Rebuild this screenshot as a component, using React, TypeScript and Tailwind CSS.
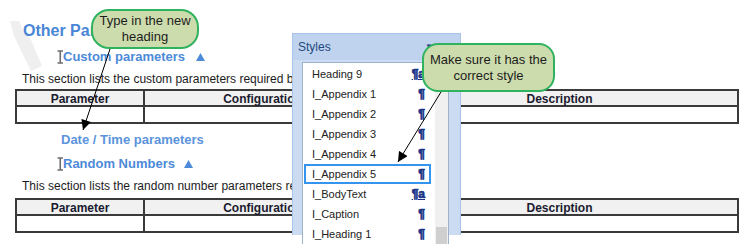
import React from "react";

const styles = [
  { name: "Heading 9", mark: "¶a" },
  { name: "I_Appendix 1", mark: "¶" },
  { name: "I_Appendix 2", mark: "¶" },
  { name: "I_Appendix 3", mark: "¶" },
  { name: "I_Appendix 4", mark: "¶" },
  { name: "I_Appendix 5", mark: "¶", selected: true },
  { name: "I_BodyText", mark: "¶a" },
  { name: "I_Caption", mark: "¶" },
  { name: "I_Heading 1", mark: "¶" },
];

function IBeam() {
  return (
    <svg width="7" height="14" viewBox="0 0 7 14" className="-mr-[1px] shrink-0">
      <path d="M0.5 1 H6 M3.25 1 V13 M0.5 13 H6" stroke="#6e6e6e" strokeWidth="1.6" fill="none" />
    </svg>
  );
}

function Tri() {
  return (
    <svg width="9" height="8" viewBox="0 0 9 8" className="shrink-0">
      <path d="M4.5 0 L9 8 L0 8 Z" fill="#4d8ad8" />
    </svg>
  );
}

function ParamTable({ className }: { className: string }) {
  return (
    <div className={`mx-[15px] w-[724px] border-2 border-[#3a3a3a] ${className}`}>
      <div className="grid grid-cols-[128px_237px_1fr] h-[16px] bg-[#f1f1f1] border-b-2 border-[#3a3a3a] text-[12px] font-bold text-[#1b1b30] leading-[16px] text-center">
        <div className="border-r-2 border-[#3a3a3a]">Parameter</div>
        <div className="border-r-2 border-[#3a3a3a]">Configuration</div>
        <div>Description</div>
      </div>
      <div className="grid grid-cols-[128px_237px_1fr] h-[15px]">
        <div className="border-r-2 border-[#3a3a3a]" />
        <div className="border-r-2 border-[#3a3a3a]" />
        <div />
      </div>
    </div>
  );
}

export default function App() {
  return (
    <div className="relative w-[756px] h-[248px] overflow-hidden bg-white font-['Liberation_Sans',Arial,sans-serif]">
      {/* faded shape behind heading */}
      <svg className="absolute left-0 top-0" width="50" height="80">
        <polygon points="10,21 19,21 23,31 28,33 42,66 31,71 14,36" fill="#efefef" />
      </svg>

      {/* document */}
      <div className="relative pt-[21px]">
        <div className="pl-[23px] text-[16px] leading-[20px] font-bold text-[#4a86d6]">Other Parameters</div>
        <div className="mt-[6px] pl-[57px] flex items-center gap-[11px] h-[20px]">
          <div className="flex items-center">
            <IBeam />
            <span className="text-[13px] font-bold text-[#4d8ad8] leading-[20px]">Custom parameters</span>
          </div>
          <Tri />
        </div>
        <div className="mt-[4px] pl-[22px] text-[12px] leading-[16px] text-[#1c1c1c] whitespace-nowrap">
          This section lists the custom parameters required by the application and how they are configured.
        </div>
        <ParamTable className="mt-[2px]" />
        <div className="mt-[6px] pl-[61px] text-[13px] font-bold text-[#5b94dc] leading-[20px]">Date / Time parameters</div>
        <div className="mt-[4px] pl-[57px] flex items-center gap-[9px] h-[20px]">
          <div className="flex items-center">
            <IBeam />
            <span className="text-[13px] font-bold text-[#4d8ad8] leading-[20px]">Random Numbers</span>
          </div>
          <Tri />
        </div>
        <div className="mt-[4px] pl-[22px] text-[12px] leading-[16px] text-[#1c1c1c] whitespace-nowrap">
          This section lists the random number parameters required by the application.
        </div>
        <ParamTable className="mt-[4px]" />
      </div>

      {/* styles pane */}
      <div className="absolute left-[292px] top-[33px] w-[169px] h-[202px] border border-b-0 border-[#a9c4ea] bg-[#cbdcf2] flex flex-col">
        <div className="h-[26px] shrink-0 bg-[#bfd3ee] flex items-center justify-between pl-[5px] pr-[27px]">
          <span className="text-[12px] text-[#23487f]">Styles</span>
          <span className="text-[8px] text-[#1d3b8b]">▼</span>
        </div>
        <div className="ml-[9px] mt-[2px] w-[147px] flex-1 border border-b-0 border-[#9fb2cb] bg-white flex">
          <div className="w-[132px] pt-[1px]">
            {styles.map((s) => (
              <div
                key={s.name}
                className={`ml-[1px] w-[127px] h-[20px] flex items-center justify-between pl-[6px] pr-[4px] text-[11px] text-[#222] ${
                  s.selected ? "border-2 border-[#3594ee]" : "border-2 border-transparent"
                }`}
              >
                <span>{s.name}</span>
                <span
                  className={`font-black text-[12px] text-[#1a3588] [-webkit-text-stroke:0.7px_#1a3588] ${
                    s.mark === "¶a" ? "underline" : ""
                  }`}
                >
                  {s.mark}
                </span>
              </div>
            ))}
          </div>
          <div className="flex-1 bg-[#f0f0f0] flex flex-col justify-end">
            <div className="h-[17px] mx-[1px] bg-[#cfcfcf]" />
          </div>
        </div>
      </div>

      {/* arrows */}
      <svg className="absolute inset-0 pointer-events-none" width="756" height="248">
        <defs>
          <marker id="ah" viewBox="0 0 10 10" refX="10" refY="5" markerWidth="11" markerHeight="10" orient="auto" markerUnits="userSpaceOnUse">
            <path d="M0,0 L10,5 L0,10 z" fill="#000" />
          </marker>
        </defs>
        <line x1="110" y1="49" x2="83" y2="130" stroke="#000" strokeWidth="1" markerEnd="url(#ah)" />
        <line x1="441" y1="92" x2="398" y2="162" stroke="#000" strokeWidth="1" markerEnd="url(#ah)" />
      </svg>

      {/* callouts */}
      <div className="absolute left-[91px] top-[9px] w-[108px] h-[40px] rounded-[18px] border-2 border-[#2fb35e] bg-[#cddcad] flex items-center justify-center text-center text-[13px] leading-[16px] text-[#1c1c1c]">
        Type in the new
        <br />
        heading
      </div>
      <div className="absolute left-[422px] top-[43px] w-[133px] h-[49px] rounded-[16px] border-2 border-[#2fb35e] bg-[#cddcad] flex items-center justify-center text-center text-[13px] leading-[16px] text-[#1c1c1c]">
        Make sure it has the
        <br />
        correct style
      </div>
    </div>
  );
}
